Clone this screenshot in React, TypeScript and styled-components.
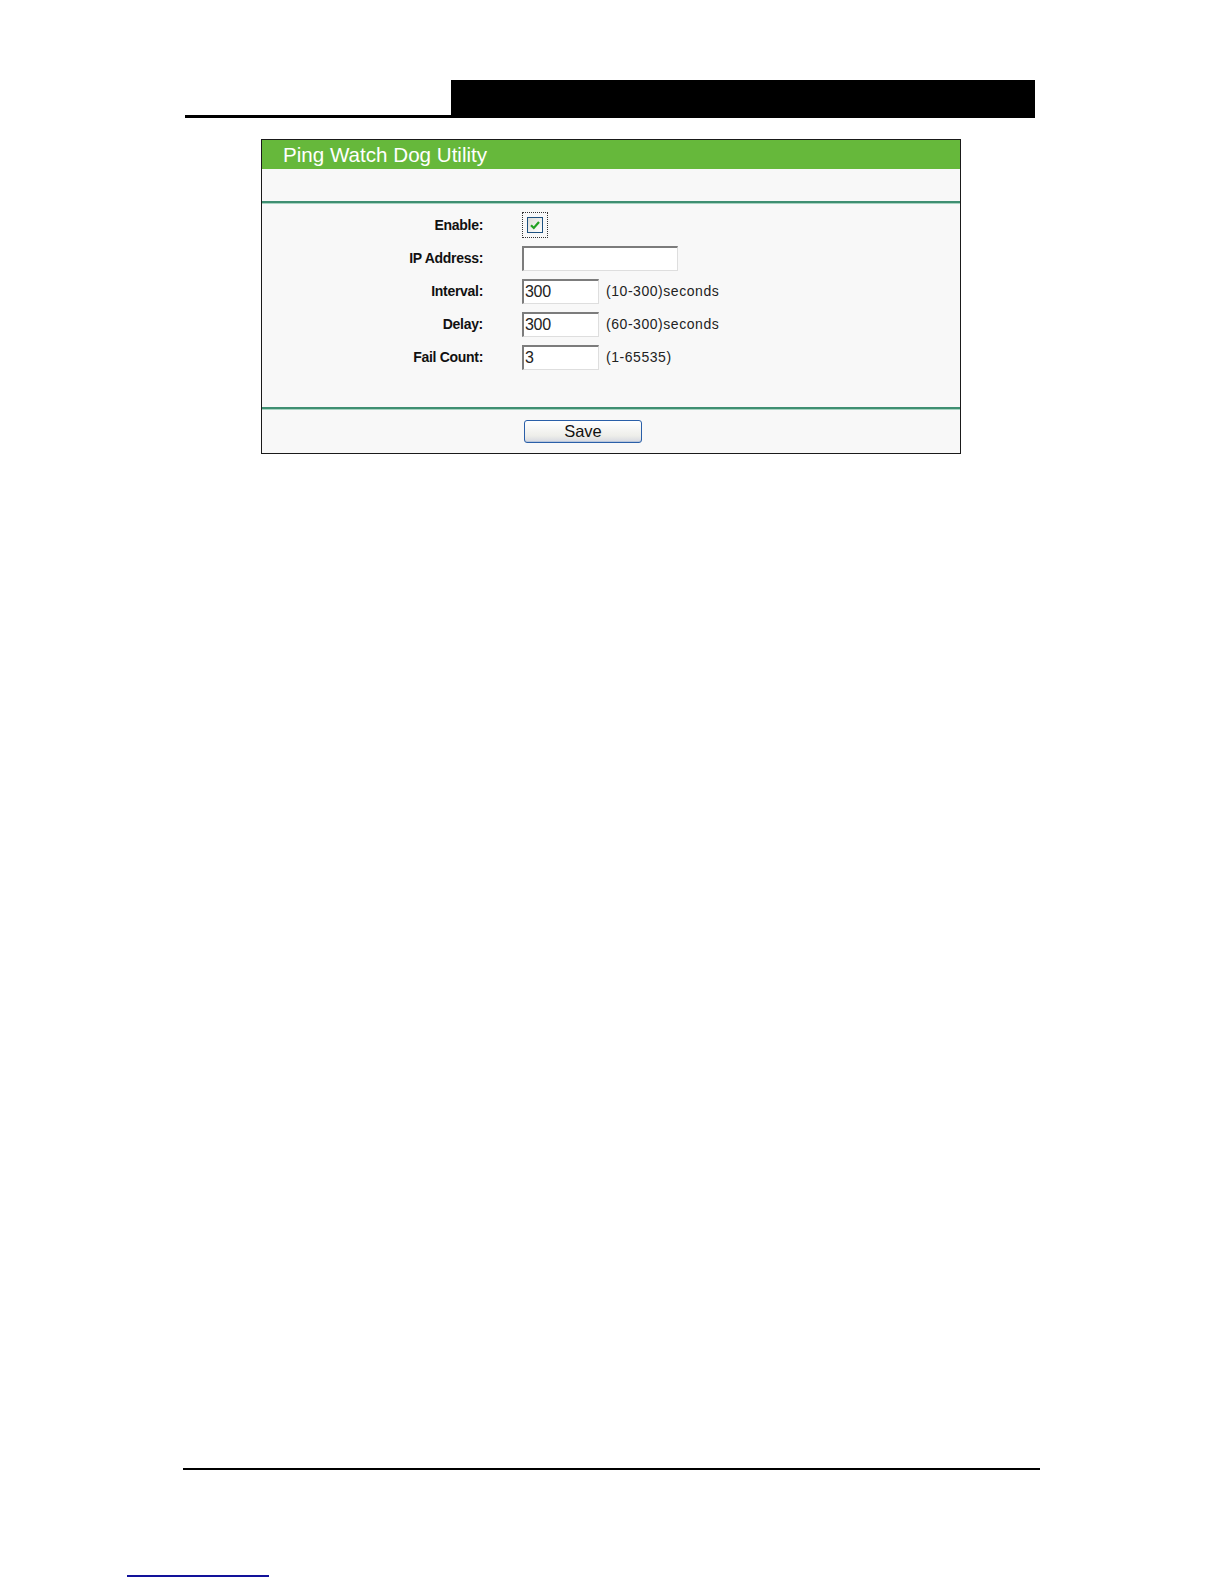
import React from 'react';
import styled, { createGlobalStyle } from 'styled-components';

const GlobalStyle = createGlobalStyle`
    html, body {
        margin: 0;
        padding: 0;
        background: #ffffff;
    }
    body {
        font-family: "Liberation Sans", Arial, sans-serif;
    }
`;

const Page = styled.div`
    width: 1224px;
    height: 1584px;
    overflow: hidden;
    padding-top: 80px;
    box-sizing: border-box;
`;

// Top header: black block with a rule under it
const Header = styled.div`
    display: flex;
    justify-content: flex-end;
    margin-left: 185px;
    width: 850px;
    border-bottom: 3px solid #000;
`;

const HeaderBlock = styled.div`
    width: 584px;
    height: 35px;
    background: #000;
`;

// Router settings panel
const Panel = styled.div`
    margin: 21px 0 0 261px;
    width: 700px;
    box-sizing: border-box;
    border: 1px solid #1a1a1a;
    background: #f8f8f8;
`;

const TitleBar = styled.div`
    display: flex;
    align-items: center;
    height: 29px;
    padding-left: 21px;
    background: #66b83b;
    color: #ffffff;
    font-size: 20.6px;
`;

const Band = styled.div`
    height: 32px;
`;

const Divider = styled.div`
    height: 2px;
    background: #3f8f72;
    box-shadow: 0 1px 0 #a9d4c2;
`;

const Form = styled.div`
    display: grid;
    grid-template-columns: 221px auto;
    grid-auto-rows: 33px;
    column-gap: 39px;
    padding: 5.5px 0 33.5px;
`;

const Label = styled.div`
    display: flex;
    align-items: center;
    justify-content: flex-end;
    font-size: 14px;
    font-weight: bold;
    color: #111;
    letter-spacing: -0.3px;
`;

const Field = styled.div`
    display: flex;
    align-items: center;
    gap: 7px;
`;

const Input = styled.div<{ $w: number }>`
    display: flex;
    align-items: center;
    width: ${({ $w }) => $w}px;
    height: 25px;
    box-sizing: border-box;
    background: #ffffff;
    border-top: 2px solid #7c7c7c;
    border-left: 2px solid #7c7c7c;
    border-bottom: 1px solid #dedede;
    border-right: 1px solid #dedede;
    padding-left: 1px;
    font-size: 16px;
    letter-spacing: -0.3px;
    color: #222;
`;

const Hint = styled.span`
    font-size: 14px;
    letter-spacing: 0.55px;
    color: #222;
`;

const FocusRing = styled.div`
    display: flex;
    align-items: center;
    justify-content: center;
    width: 26px;
    height: 26px;
    box-sizing: border-box;
    border: 1px dotted #333;
`;

const CheckBox = styled.div`
    display: flex;
    align-items: center;
    justify-content: center;
    width: 16px;
    height: 16px;
    box-sizing: border-box;
    border: 1px solid #1d5180;
    background: linear-gradient(135deg, #dcdcd6, #ffffff);
`;

const ButtonRow = styled.div`
    display: grid;
    grid-template-columns: 221px auto;
    column-gap: 41px;
    padding: 11px 0 10px;
`;

const SaveButton = styled.button`
    display: flex;
    align-items: center;
    justify-content: center;
    width: 118px;
    height: 23px;
    padding: 0 0 1px;
    border: 1px solid #2a5fa8;
    border-radius: 3px;
    background: linear-gradient(#ffffff, #eeeeea 70%, #d6d8e0);
    box-shadow: inset 0 -1px 0 #b8c6dc;
    font-family: "Liberation Sans", Arial, sans-serif;
    font-size: 16.5px;
    line-height: 1;
    color: #111;
`;

const FooterRule = styled.div`
    margin: 1014px 0 0 183px;
    width: 857px;
    height: 2px;
    background: #000;
`;

const LinkRule = styled.div`
    margin: 105px 0 0 127px;
    width: 142px;
    height: 2px;
    background: #12129a;
`;

const Check: React.FC = () => (
    <svg width="12" height="12" viewBox="0 0 12 12">
        <path d="M2 6.2 L4.8 9 L10 3" fill="none" stroke="#21a121" strokeWidth="2.2" />
    </svg>
);

type Row = { label: string; value: string; width: number; hint?: string };

const rows: Row[] = [
    { label: 'IP Address:', value: '', width: 156 },
    { label: 'Interval:', value: '300', width: 77, hint: '(10-300)seconds' },
    { label: 'Delay:', value: '300', width: 77, hint: '(60-300)seconds' },
    { label: 'Fail Count:', value: '3', width: 77, hint: '(1-65535)' },
];

const App: React.FC = () => {
    return (
        <Page>
            <GlobalStyle />
            <Header>
                <HeaderBlock />
            </Header>
            <Panel>
                <TitleBar>Ping Watch Dog Utility</TitleBar>
                <Band />
                <Divider />
                <Form>
                    <Label>Enable:</Label>
                    <Field>
                        <FocusRing>
                            <CheckBox>
                                <Check />
                            </CheckBox>
                        </FocusRing>
                    </Field>
                    {rows.map((row) => (
                        <React.Fragment key={row.label}>
                            <Label>{row.label}</Label>
                            <Field>
                                <Input $w={row.width}>{row.value}</Input>
                                {row.hint && <Hint>{row.hint}</Hint>}
                            </Field>
                        </React.Fragment>
                    ))}
                </Form>
                <Divider />
                <ButtonRow>
                    <span />
                    <SaveButton>Save</SaveButton>
                </ButtonRow>
            </Panel>
            <FooterRule />
            <LinkRule />
        </Page>
    );
};

export default App;
